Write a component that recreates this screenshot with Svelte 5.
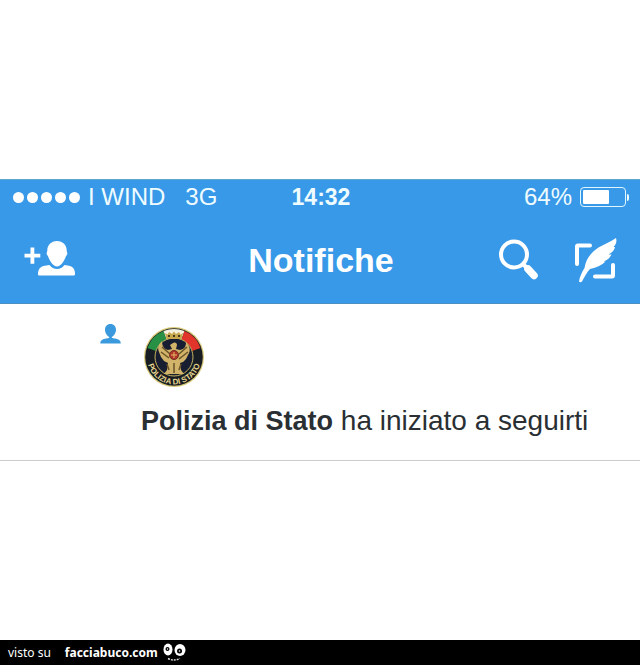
<script lang="ts">
	// status bar
	let carrier: string = 'WIND';
	let network: string = '3G';
	let time: string = '14:32';
	let battery: number = 64;

	// who started following
	let follower: string = 'Polizia di Stato';
</script>

<div class="page">
	<main class="screen">
		<header>
			<div class="status">
				<div class="signal">
					<span class="dots">
						{#each Array.from({ length: 5 }) as _}
							<i class="dot"></i>
						{/each}
					</span>
					<span>I {carrier}</span>
					<span class="network">{network}</span>
				</div>
				<time>{time}</time>
				<div class="power">
					<span>{battery}%</span>
					<span class="battery"><span class="charge" style="width:{battery}%"></span></span>
				</div>
			</div>

			<nav>
				<div class="side">
					<button aria-label="Aggiungi amici">
						<svg width="52" height="38" viewBox="0 0 52 38" fill="#fff">
							<path d="M6.500 8.500h3.800v6.200h6v3.800h-6v6.200H6.500v-6.200h-6v-3.800h6z" />
							<path d="M33 2c6 0 9.700 4.300 9.700 9.500 0 1.600.8 1.600.6 3.300-.2 1.500-1.200 1.700-1.600 3.200C40 22 37 27.500 33 27.500S26 22 24.300 18c-.4-1.500-1.400-1.700-1.600-3.200-.2-1.700.6-1.700.6-3.300C23.300 6.300 27 2 33 2z" />
							<path d="M25.500 26c2 2.800 4.500 4 7.500 4s5.500-1.200 7.500-4c4.500.5 7.500 1.200 9.100 3.500 1.200 1.800 1.400 3.800 1.400 5.500 0 1-.6 1.500-1.500 1.500h-34c-.9 0-1.500-.5-1.500-1.500 0-1.700.3-3.700 1.500-5.500 1.700-2.300 5.500-3 10-3.500z" />
						</svg>
					</button>
				</div>
				<h1>Notifiche</h1>
				<div class="side actions">
					<button aria-label="Cerca">
						<svg width="42" height="42" viewBox="0 0 42 42" fill="none" stroke="#fff">
							<circle cx="16" cy="15.500" r="13" stroke-width="4" />
							<path d="M25 25l4 4" stroke-width="4" />
							<path d="M30 30l6 6.500" stroke-width="7.500" stroke-linecap="round" />
						</svg>
					</button>
					<button aria-label="Scrivi">
						<svg width="44" height="46" viewBox="0 0 44 46">
							<path d="M3 27V9.500q0-1 1-1h12M39 28v10.500q0 1-1 1H21" fill="none" stroke="#fff" stroke-width="4" stroke-linecap="round" stroke-linejoin="round" />
							<path d="M5 44.500c.8-5 3-9.500 5.500-13.500 1.500-9 6-15 14-20.500C31 6.500 37 5 42 1c1 3.500.2 6-2.500 9l1.500 0c-.5 3-3 5.500-6.500 7.500h3c-1.500 3.500-4 5.500-8 7h2c-3.500 3.500-8.500 6-15.500 7.500C13 35 10.500 40 8 44.500c-.8 1-2.500 1-3 0z" fill="#fff" />
						</svg>
					</button>
				</div>
			</nav>
		</header>

		<article>
			<svg class="kind" width="22" height="22" viewBox="0 0 22 22" fill="#3b9add" aria-hidden="true">
				<path d="M10.500 1c3.600 0 5.500 2.500 5.500 5.500 0 3.200-2 6.500-4.200 7.500v.8c3.700 1.200 9 .8 9 5.700H.300c0-4.900 5.200-4.500 8.900-5.700V14C7 13 5 9.700 5 6.500 5 3.500 6.900 1 10.500 1z" />
			</svg>
			<div class="body">
				<svg class="avatar" width="62" height="62" viewBox="0 0 62 62" role="img" aria-label={follower}>
					<defs>
						<path id="motto" d="M4.200 28a27 27 0 1 0 53.600 0" />
					</defs>
					<circle cx="31" cy="31" r="30" fill="#d8c979" />
					<circle cx="31" cy="31" r="28.800" fill="#171d22" />
					<!-- tricolour arc -->
					<path d="M4.500 22A28 28 0 0 1 20.500 5l3.300 9A18.500 18.500 0 0 0 13 25z" fill="#289044" />
					<path d="M20.500 5a28 28 0 0 1 21 0l-3.300 9a18.500 18.500 0 0 0-14.400 0z" fill="#f4f1df" />
					<path d="M41.500 5a28 28 0 0 1 16 17L49 25a18.500 18.500 0 0 0-10.800-11z" fill="#e1342b" />
					<circle cx="31" cy="31" r="19" fill="#171e31" stroke="#c5b260" />
					<!-- crown -->
					<path d="M22 7l2.500 1.500L26 6l3 2 2-2.500L33 8l3-2 1.500 2.500L40 7l-1.500 6h-15z" fill="#c6a84d" />
					<path d="M25 10h2m3 0h2m3 0h2" stroke="#4a3b20" stroke-width="2" />
					<!-- eagle -->
					<path d="M30 17c2-1.500 4 0 4 2l-1 4 4 1c5-1 6-4 6-8 4 4 5 9 2 13l-2 4-3 3-3 1 1 7 3 4H21l3-4 1-7-4-2-3-4-2-5c-2-5 0-8 3-11 0 5 2 8 6 9l4-1-2-4z" fill="#d2b36a" />
					<path d="M19 21l8 7m-9-2l8 6m18-11l-8 7m9-2l-9 7M24 38l2 6m12-6l-2 6M31 37v10" stroke="#685426" stroke-width="1.500" />
					<circle cx="31" cy="29" r="4.500" fill="#b3352a" stroke="#743021" />
					<path d="M31 26v6m-3-3h6" stroke="#e0be65" />
					<text class="motto"><textPath href="#motto" startOffset="50%" text-anchor="middle">POLIZIA DI STATO</textPath></text>
				</svg>
				<p><strong>{follower}</strong> ha iniziato a seguirti</p>
			</div>
		</article>
	</main>

	<footer>
		<span>visto su</span>
		<a href="#facciabuco">facciabuco.com</a>
		<svg width="24" height="22" viewBox="0 0 24 22" aria-hidden="true">
			<ellipse cx="5" cy="7.500" rx="4.500" ry="6" fill="#fff" />
			<ellipse cx="17" cy="8" rx="5.500" ry="6" fill="#fff" />
			<circle cx="4.500" cy="7" r="2" />
			<circle cx="16.500" cy="9" r="2.500" />
			<circle cx="4.500" cy="7" r=".7" fill="#fff" />
			<circle cx="16.500" cy="9" r=".8" fill="#fff" />
			<path d="M5 16.500q6 3 12 0" fill="none" stroke="#ddd" stroke-width="1.500" stroke-dasharray="2 1" />
		</svg>
	</footer>
</div>

<style>
	:global(body) {
		margin: 0;
		background: #fff;
	}

	.page {
		display: flex;
		flex-direction: column;
		min-height: 100vh;
		font-family: 'Liberation Sans', Arial, sans-serif;
	}

	.screen {
		flex: 1;
		padding-top: 179px;
	}

	header {
		box-sizing: border-box;
		color: #fff;
		background: #3899e8;
		border-top: 1px solid #61a5cf;
		border-bottom: 1px solid #4b91c0;
	}

	.status,
	nav {
		display: grid;
		grid-template-columns: 1fr auto 1fr;
		align-items: center;
	}

	.status {
		padding: 0 11px 0 13px;
		font-size: 24px;
		line-height: 34px;
		color: #effcff;
	}

	.signal,
	.power,
	.actions {
		display: flex;
		align-items: center;
	}

	.dots {
		display: flex;
		gap: 3px;
		margin-right: 8px;
	}

	.dot {
		width: 11px;
		height: 11px;
		border-radius: 50%;
		background: #fff;
	}

	.network {
		margin-left: 20px;
	}

	time {
		font-size: 23px;
		font-weight: bold;
	}

	.power {
		justify-content: flex-end;
		gap: 8px;
	}

	.battery {
		position: relative;
		box-sizing: border-box;
		width: 46px;
		height: 20px;
		margin-right: 3px;
		padding: 2px;
		border: 1px solid #dff6ff;
		border-radius: 4px;
	}

	.battery::after {
		content: '';
		position: absolute;
		top: 6px;
		right: -4px;
		width: 2px;
		height: 7px;
		border-radius: 0 2px 2px 0;
		background: #effcff;
	}

	.charge {
		display: block;
		height: 100%;
		border-radius: 1px;
		background: #fff;
	}

	nav {
		padding: 2px 22px 0 24px;
		min-height: 87px;
	}

	h1 {
		margin: 0;
		font-size: 34px;
		line-height: 40px;
	}

	.actions {
		justify-content: flex-end;
		gap: 34px;
	}

	button {
		padding: 0;
		border: 0;
		background: none;
		cursor: pointer;
	}

	svg {
		display: block;
	}

	article {
		display: flex;
		gap: 19px;
		padding: 19px 24px 23px 100px;
		border-bottom: 1px solid #ccc;
	}

	.body {
		flex: 1;
		padding-top: 3px;
	}

	.avatar {
		margin-left: 2px;
	}

	.motto {
		font-size: 8px;
		font-weight: bold;
		fill: #e6d58d;
	}

	p {
		margin: 17px 0 0;
		font-size: 28px;
		line-height: 32px;
		color: #292f33;
	}

	strong {
		font-size: 27px;
	}

	footer {
		display: flex;
		align-items: center;
		height: 25px;
		padding: 0 8px;
		font-family: 'Noto Sans', sans-serif;
		font-size: 12px;
		color: #fff;
		background: #000;
	}

	footer a {
		margin: 0 5px 0 14px;
		font-weight: bold;
		color: #fff;
		text-decoration: none;
	}
</style>
